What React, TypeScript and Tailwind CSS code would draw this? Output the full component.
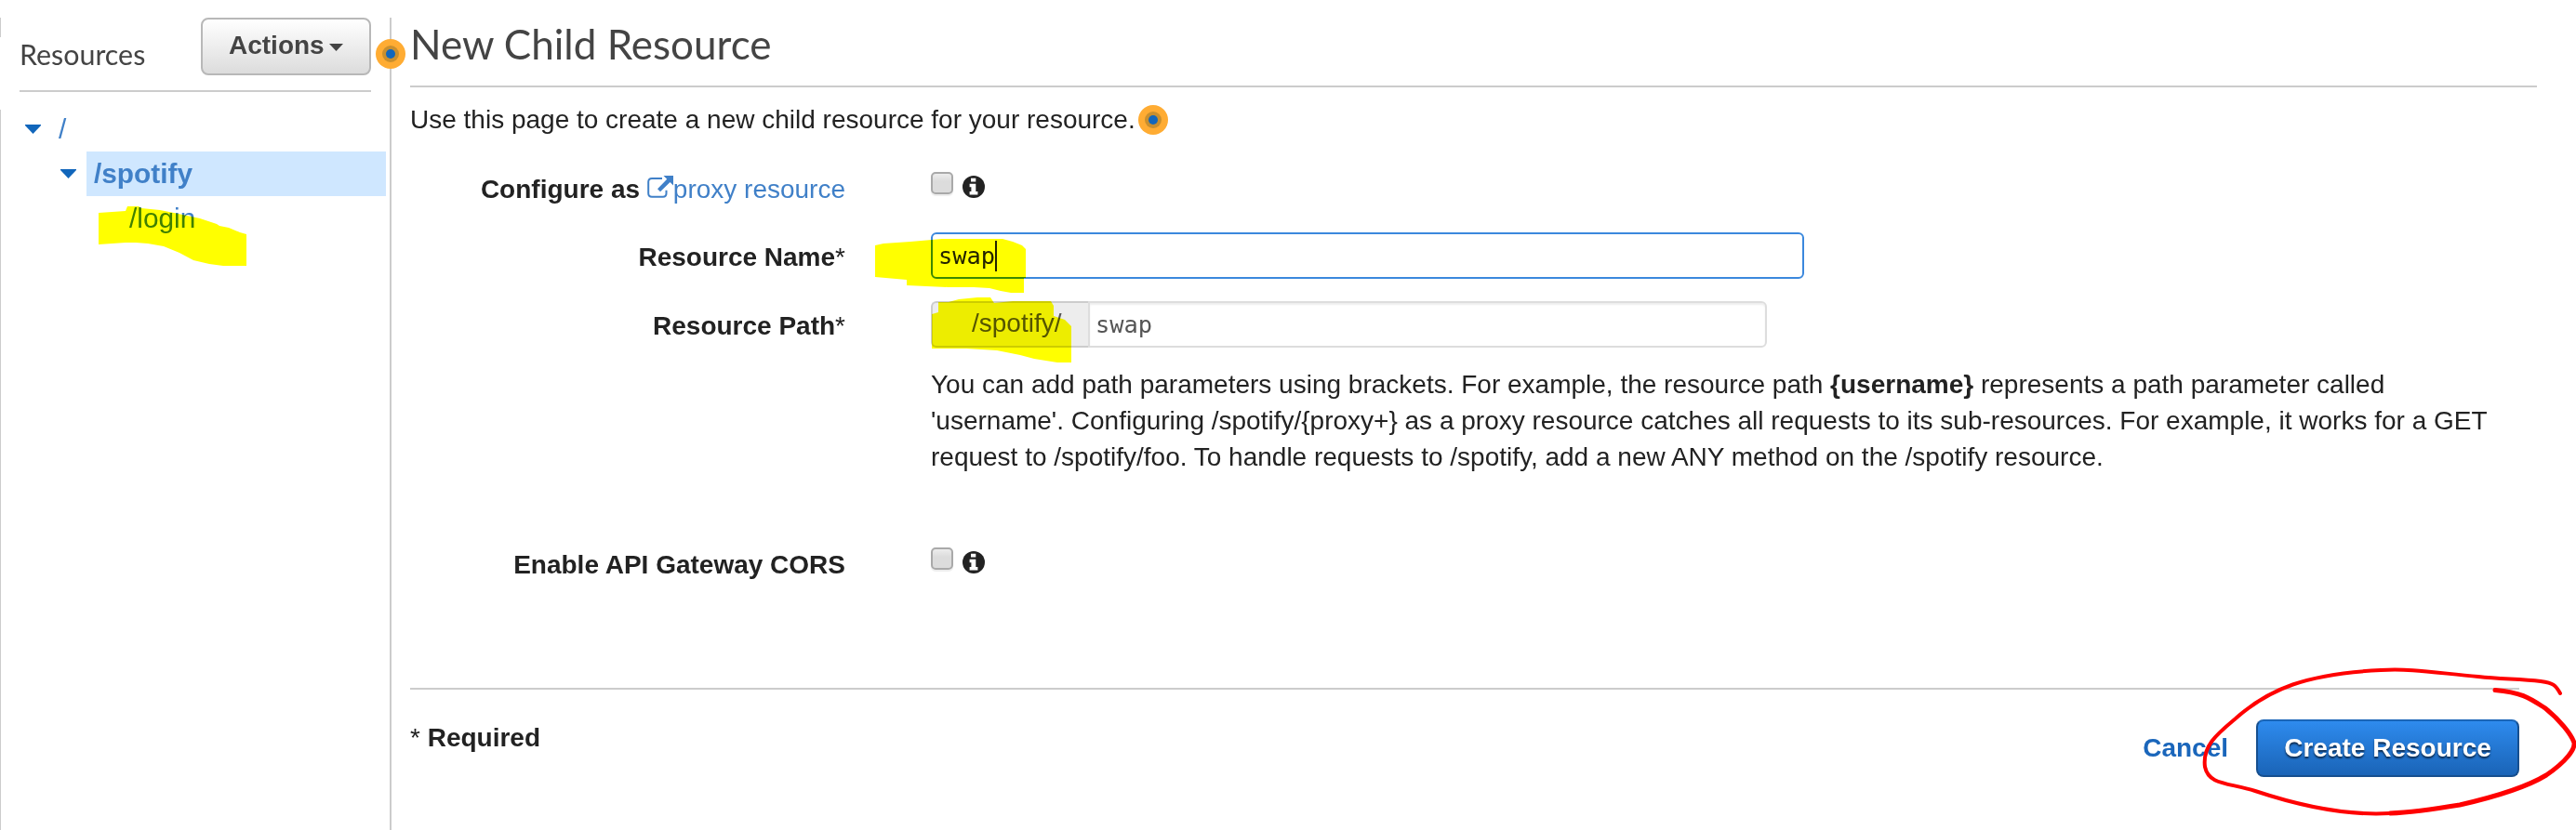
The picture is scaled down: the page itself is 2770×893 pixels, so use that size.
import React from "react";

function Dot({ className }: { className: string }) {
  return (
    <svg className={className} width="32" height="32" viewBox="0 0 32 32">
      <circle cx="16" cy="16" r="16" fill="#ffac33" />
      <circle cx="16" cy="16" r="9" fill="#c98f2e" />
      <circle cx="16" cy="16" r="5" fill="#1166bb" />
    </svg>
  );
}

function Caret() {
  return (
    <svg width="17" height="10" viewBox="0 0 17 10" className="shrink-0">
      <path d="M0 0H17V1L8.5 10L0 1Z" fill="#1166bb" />
    </svg>
  );
}

function ExternalIcon() {
  return (
    <svg width="28" height="25" viewBox="0 0 28 25" className="inline-block align-[-1px]" fill="none">
      <path d="M16 3H5Q1.2 3 1.2 6.800V19Q1.2 22.800 5 22.800H17Q20.500 22.800 20.500 19V15.700" stroke="#4080c8" strokeWidth="2" />
      <path d="M17.500 0H28V10.500L24.500 7L14 17.200L11 14.200L21.200 3.700Z" fill="#4080c8" />
    </svg>
  );
}

function InfoIcon() {
  return (
    <svg width="24" height="24" viewBox="0 0 24 24" className="mt-1 ml-2.5">
      <circle cx="12" cy="12" r="12" fill="#222" />
      <path d="M9 2.700H14.300V6.600H9ZM7.600 8.700H14.300V17H16.400V20.500H7.600V17H9.400V12.200H7.600Z" fill="#fff" />
    </svg>
  );
}

function CheckWithInfo() {
  return (
    <div className="flex">
      <span className="h-6 w-6 rounded-[5px] border-2 border-[#a9a9a9] bg-linear-to-b from-[#ededed] to-[#dcdcdc] to-40% shadow-[0_2px_1px_#ededed]" />
      <InfoIcon />
    </div>
  );
}

function Label({ children }: { children: React.ReactNode }) {
  return <div className="w-[468px] shrink-0 text-right leading-8 font-bold whitespace-nowrap">{children}</div>;
}

export default function App() {
  return (
    <div className="relative flex h-[893px] w-[2770px] overflow-hidden bg-white pt-[19px] font-['Liberation_Sans',sans-serif] text-[28px] leading-8 text-[#222]">
      <div className="flex w-px shrink-0 flex-col">
        <div className="h-[21px] bg-[#ccc]" />
        <div className="mt-[78px] grow bg-[#ccc]" />
      </div>

      <aside className="w-[418px] shrink-0 pl-5">
        <div className="flex h-20 w-[378px] justify-between border-b-2 border-[#ccc]">
          <h2 className="mt-[21px] font-[Lato,sans-serif] text-[30.4px] leading-9 text-[#444]">Resources</h2>
          <button className="flex h-[62px] w-[183px] items-center rounded-lg border-2 border-[#b8b8b8] bg-linear-to-b from-white to-[#dcdcdc] pb-0.5 pl-7 font-bold text-[#444]">
            Actions
            <svg width="15" height="8" viewBox="0 0 15 8" className="mt-1 ml-[5px]">
              <path d="M0 0H15L7.500 8Z" fill="#444" />
            </svg>
          </button>
        </div>
        <div className="mt-4 text-[29.8px] text-[#4080c8]">
          <div className="flex h-12 items-center pl-1.5">
            <Caret />
            <span className="ml-[19px]">/</span>
          </div>
          <div className="flex h-12 items-center pl-11">
            <Caret />
            <div className="ml-[11px] flex h-12 w-[322px] items-center bg-[#cfe7ff] pl-2 font-bold">/spotify</div>
          </div>
          <div className="flex h-12 items-center pl-[118px]">/login</div>
        </div>
      </aside>

      <main className="grow border-l-2 border-[#ccc] pl-5">
        <h1 className="h-[75px] w-[2287px] border-b-2 border-[#ccc] pt-0.5 font-[Lato,sans-serif] text-[44px] leading-[52px] text-[#444]">
          New Child Resource
        </h1>
        <div className="mt-[17px] flex h-9 items-center">
          Use this page to create a new child resource for your resource.
          <Dot className="ml-[3px]" />
        </div>

        <div className="mt-[38px] flex h-[65px]">
          <div className="mt-[3px]">
            <Label>
              Configure as <span className="font-normal text-[#4080c8]"><ExternalIcon />proxy resource</span>
            </Label>
          </div>
          <div className="ml-[92px]"><CheckWithInfo /></div>
        </div>

        <div className="flex h-[74px]">
          <div className="mt-[11px]"><Label>Resource Name<span className="font-normal">*</span></Label></div>
          <div className="ml-[92px] flex h-[50px] w-[939px] items-center rounded-md border-2 border-[#3b88dd] pl-1.5">
            <span className="font-['DejaVu_Sans_Mono',monospace] text-[25.4px]">swap</span>
            <span className="h-[33px] w-0.5 bg-[#222]" />
          </div>
        </div>

        <div className="flex h-[80px]">
          <div className="mt-[11px]"><Label>Resource Path<span className="font-normal">*</span></Label></div>
          <div className="ml-[92px] flex h-[50px] w-[899px] text-[#555]">
            <div className="flex w-[169px] items-center rounded-l-md border-2 border-r-0 border-[#ccc] bg-[#ededed] pl-[42px] pb-0.5">
              /spotify/
            </div>
            <div className="flex grow items-center rounded-r-md border-2 border-[#ddd] pl-1.5 shadow-[inset_0_2px_2px_#eee]">
              <span className="font-['DejaVu_Sans_Mono',monospace] text-[25.4px]">swap</span>
            </div>
          </div>
        </div>

        <p className="-mt-[10px] ml-[560px] w-[1700px] leading-[39px]">
          You can add path parameters using brackets. For example, the resource path <b>{"{username}"}</b> represents a path parameter called
          <br />
          'username'. Configuring /spotify/{"{proxy+}"} as a proxy resource catches all requests to its sub-resources. For example, it works for a GET
          <br />
          request to /spotify/foo. To handle requests to /spotify, add a new ANY method on the /spotify resource.
        </p>

        <div className="mt-[78px] flex h-[151px]">
          <div className="mt-[3px]"><Label>Enable API Gateway CORS</Label></div>
          <div className="ml-[92px]"><CheckWithInfo /></div>
        </div>

        <footer className="flex w-[2268px] border-t-2 border-[#ccc] font-bold">
          <div className="mt-9"><span className="font-normal">*</span> Required</div>
          <button className="mt-8 ml-auto h-[62px] text-[#1a66bb]">Cancel</button>
          <button className="mt-8 ml-[30px] h-[62px] w-[283px] rounded-lg border-2 border-[#164f8f] border-t-[#1a66b8] bg-linear-to-b from-[#2e8bee] to-[#1a64b7] text-white [text-shadow:0_2px_2px_#0d2a4d]">
            Create Resource
          </button>
        </footer>
      </main>

      <Dot className="absolute top-[42px] left-[404px]" />

      <svg className="pointer-events-none absolute inset-0 mix-blend-multiply" width="2770" height="893" viewBox="0 0 2770 893" fill="#ff0">
        <path d="M106 229L135 227L137 222H149L152 224L172 226L187 229L215 235L233 241L236 243L246 245L258 250L265 252V286H240L225 284L208 280L193 272L176 265L159 262L146 261H135L106 263Z" />
        <path d="M941 264L950 262L979 260L1002 258L1013 257H1078L1089 260L1099 264L1103 268V299H1101V315H1087L1076 313L1064 310L1047 309H1020L975 307V301L941 298Z" />
        <path d="M1002 338L1009 336V325H1020L1031 322L1051 320H1065L1069 326L1089 324H1130L1133 329V340L1145 344L1152 351V390H1137L1112 386L1097 382L1072 377L1039 375H1002Z" />
      </svg>
      <svg className="pointer-events-none absolute inset-0" width="2770" height="893" viewBox="0 0 2770 893" fill="none" stroke="#f00" strokeLinecap="round" strokeLinejoin="round">
        <path strokeWidth="4" d="M2753 746C2748 737 2746 735 2732 733C2710 730 2690 731 2665 728C2620 724 2593 719 2560 721C2480 725 2440 741 2404 773C2385 789 2368 802 2371 825C2375 845 2397 842 2425 851C2470 866 2520 878 2570 875" />
        <path strokeWidth="5" d="M2683 742.500C2712 745 2720 751 2737 762C2752 774 2765 790 2768 799C2769 806 2760 819 2738 834C2715 848 2680 858 2645 866C2615 871 2595 874 2570 875" />
      </svg>
    </div>
  );
}
